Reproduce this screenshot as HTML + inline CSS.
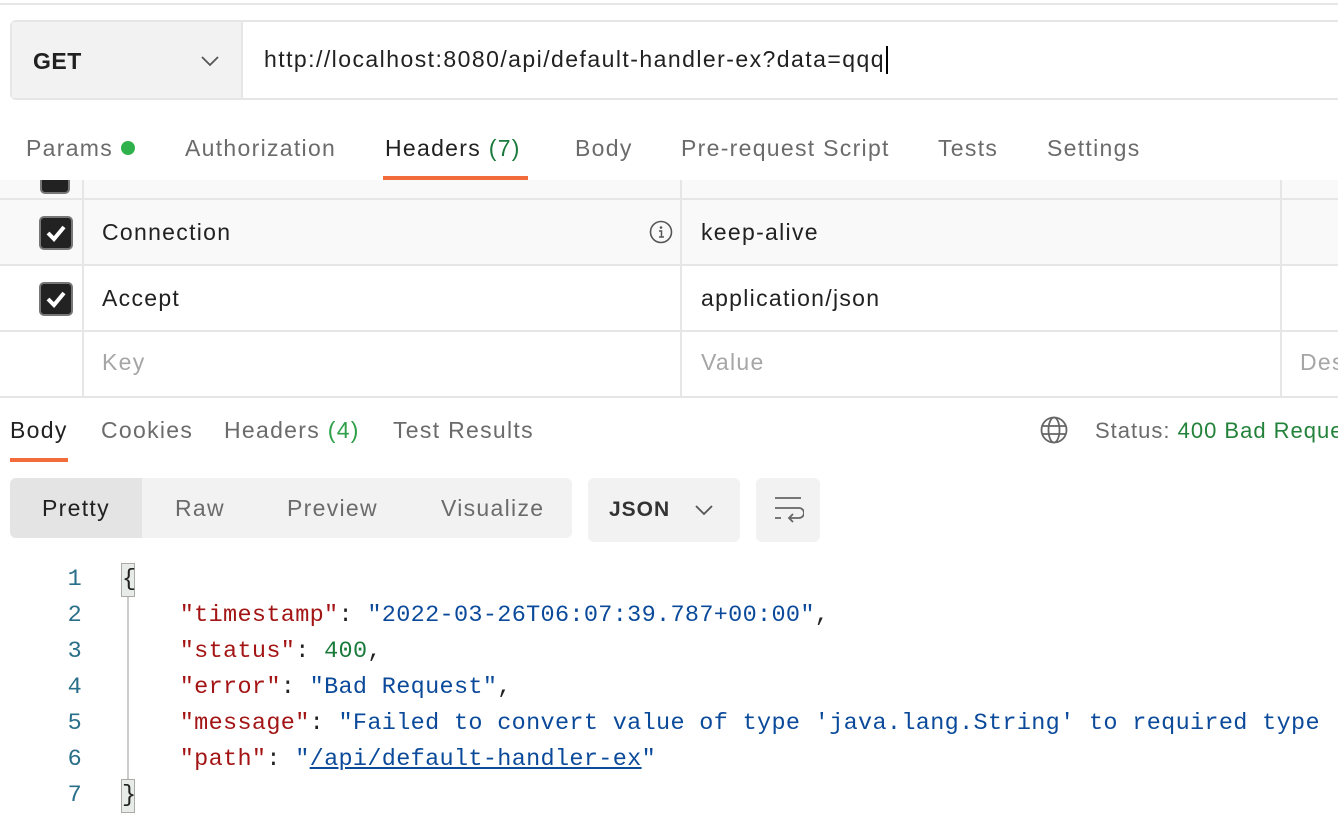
<!DOCTYPE html>
<html><head><style>
body{margin:0;width:1338px;height:818px;overflow:hidden;background:#fff;font-family:"Liberation Sans",sans-serif;position:relative;color:#212121;letter-spacing:1.3px}
.a{position:absolute;white-space:nowrap}
.t{font-size:23px;color:#6b6b6b}
.mono{font-family:"Liberation Mono",monospace;font-size:23.5px;letter-spacing:0.33px}
.k{color:#a31515}.s{color:#0b4a9a}.n{color:#1a7a3c}
.hl{position:absolute;height:2px;background:#e6e6e6}
.vl{position:absolute;width:2px;background:#e6e6e6}
.cb{position:absolute;width:30px;height:30px;background:#222;border:2px solid #777;border-radius:5px;box-sizing:border-box}
</style></head><body>
<div class="hl" style="top:3px;left:0;width:1338px"></div>
<div class="a" style="left:10px;top:20px;width:1340px;height:80px;border:2px solid #e6e6e6;border-radius:6px;box-sizing:border-box"></div>
<div class="a" style="left:12px;top:22px;width:229px;height:76px;background:#f2f2f2;border-right:2px solid #e6e6e6"></div>
<div class="a" style="left:33px;top:48px;font-size:23px;font-weight:bold;color:#212121;letter-spacing:0.5px">GET</div>
<svg class="a" style="left:200px;top:54px" width="20" height="14"><path d="M2 3l8 8 8-8" fill="none" stroke="#555" stroke-width="1.8"/></svg>
<div class="a" style="left:264px;top:46px;font-size:23px;color:#212121;letter-spacing:1.45px">http://localhost:8080/api/default-handler-ex?data=qqq</div>
<div class="a" style="left:886px;top:46px;width:2px;height:28px;background:#000"></div>

<div class="a t" style="left:26px;top:135px">Params</div>
<div class="a" style="left:121px;top:141px;width:14px;height:14px;border-radius:50%;background:#2fb24c"></div>
<div class="a t" style="left:185px;top:135px">Authorization</div>
<div class="a t" style="left:385px;top:135px;color:#212121">Headers <span style="color:#1a7a3c">(7)</span></div>
<div class="a" style="left:383px;top:176px;width:145px;height:4px;background:#f26b3a"></div>
<div class="a t" style="left:575px;top:135px">Body</div>
<div class="a t" style="left:681px;top:135px">Pre-request Script</div>
<div class="a t" style="left:938px;top:135px">Tests</div>
<div class="a t" style="left:1047px;top:135px">Settings</div>

<div class="a" style="left:0;top:180px;width:1338px;height:85px;background:#f9f9f9;overflow:hidden">
<div class="cb" style="left:40px;top:-16px"></div>
</div>
<div class="hl" style="top:198px;left:0;width:1338px"></div>
<div class="hl" style="top:264px;left:0;width:1338px"></div>
<div class="hl" style="top:330px;left:0;width:1338px"></div>
<div class="hl" style="top:396px;left:0;width:1338px"></div>
<div class="vl" style="left:82px;top:180px;height:217px"></div>
<div class="vl" style="left:680px;top:180px;height:217px"></div>
<div class="vl" style="left:1280px;top:180px;height:217px"></div>
<div class="cb" style="left:39px;top:216px;width:34px;height:34px"></div>
<div class="cb" style="left:39px;top:282px;width:34px;height:34px"></div>
<svg class="a" style="left:39px;top:216px" width="34" height="34"><path d="M9 17l6 6 10-12" fill="none" stroke="#fff" stroke-width="4"/></svg>
<svg class="a" style="left:39px;top:282px" width="34" height="34"><path d="M9 17l6 6 10-12" fill="none" stroke="#fff" stroke-width="4"/></svg>
<div class="a" style="left:102px;top:219px;font-size:23px">Connection</div>
<svg class="a" style="left:649px;top:220px" width="24" height="24"><circle cx="12" cy="12" r="10.5" fill="none" stroke="#555" stroke-width="1.6"/><circle cx="12" cy="7.5" r="1.3" fill="#555"/><path d="M10 11h2.5v6M10 17h5" fill="none" stroke="#555" stroke-width="1.5"/></svg>
<div class="a" style="left:701px;top:219px;font-size:23px">keep-alive</div>
<div class="a" style="left:102px;top:285px;font-size:23px">Accept</div>
<div class="a" style="left:701px;top:285px;font-size:23px">application/json</div>
<div class="a" style="left:102px;top:349px;font-size:23px;color:#a6a6a6">Key</div>
<div class="a" style="left:701px;top:349px;font-size:23px;color:#a6a6a6">Value</div>
<div class="a" style="left:1300px;top:349px;font-size:23px;color:#a6a6a6">Des</div>

<div class="a t" style="left:10px;top:417px;color:#212121">Body</div>
<div class="a" style="left:10px;top:458px;width:58px;height:4px;background:#f26b3a"></div>
<div class="a t" style="left:101px;top:417px">Cookies</div>
<div class="a t" style="left:224px;top:417px">Headers <span style="color:#2fa04a">(4)</span></div>
<div class="a t" style="left:393px;top:417px">Test Results</div>
<svg class="a" style="left:1039px;top:415px" width="30" height="30"><g fill="none" stroke="#666" stroke-width="1.8"><circle cx="15" cy="15" r="12.5"/><ellipse cx="15" cy="15" rx="5.5" ry="12.5"/><path d="M3 11h24M3 19h24"/></g></svg>
<div class="a" style="left:1095px;top:418px;font-size:22px;color:#6b6b6b;letter-spacing:1px">Status: <span style="color:#23823a">400 Bad Request</span></div>

<div class="a" style="left:10px;top:478px;width:562px;height:60px;background:#f2f2f2;border-radius:6px"></div>
<div class="a" style="left:10px;top:478px;width:132px;height:60px;background:#e4e4e4;border-radius:6px 0 0 6px"></div>
<div class="a t" style="left:42px;top:495px;color:#212121">Pretty</div>
<div class="a t" style="left:175px;top:495px">Raw</div>
<div class="a t" style="left:287px;top:495px">Preview</div>
<div class="a t" style="left:441px;top:495px">Visualize</div>
<div class="a" style="left:588px;top:478px;width:152px;height:64px;background:#f2f2f2;border-radius:6px"></div>
<div class="a" style="left:609px;top:498px;font-size:21px;font-weight:bold;color:#333;letter-spacing:1px">JSON</div>
<svg class="a" style="left:694px;top:503px" width="20" height="14"><path d="M2 3l8 8 8-8" fill="none" stroke="#555" stroke-width="1.8"/></svg>
<div class="a" style="left:756px;top:478px;width:64px;height:64px;background:#f2f2f2;border-radius:6px"></div>
<svg class="a" style="left:772px;top:494px" width="32" height="32"><g fill="none" stroke="#666" stroke-width="1.8"><path d="M3 4h26M3 14h24a5 5 0 0 1 0 10h-9M3 24h6"/><path d="M21 20l-4 4 4 4"/></g></svg>

<div class="a" style="left:121px;top:563px;width:14px;height:34px;background:#e8ece8;border:1.5px solid #aaa;box-sizing:border-box"></div>
<div class="a" style="left:121px;top:779px;width:14px;height:34px;background:#e8ece8;border:1.5px solid #aaa;box-sizing:border-box"></div>
<div class="a" style="left:127px;top:597px;width:2px;height:182px;background:#ccc"></div>
<div class="a mono" style="left:0;top:562px;width:82px;text-align:right;line-height:36px;color:#2a6f8a">1<br>2<br>3<br>4<br>5<br>6<br>7</div>
<div class="a mono" style="left:122px;top:562px;line-height:36px">{<br>&nbsp;&nbsp;&nbsp;&nbsp;<span class="k">"timestamp"</span>: <span class="s">"2022-03-26T06:07:39.787+00:00"</span>,<br>&nbsp;&nbsp;&nbsp;&nbsp;<span class="k">"status"</span>: <span class="n">400</span>,<br>&nbsp;&nbsp;&nbsp;&nbsp;<span class="k">"error"</span>: <span class="s">"Bad Request"</span>,<br>&nbsp;&nbsp;&nbsp;&nbsp;<span class="k">"message"</span>: <span class="s">"Failed to convert value of type 'java.lang.String' to required type</span><br>&nbsp;&nbsp;&nbsp;&nbsp;<span class="k">"path"</span>: <span class="s">"<u>/api/default-handler-ex</u>"</span><br>}</div>
</body></html>
